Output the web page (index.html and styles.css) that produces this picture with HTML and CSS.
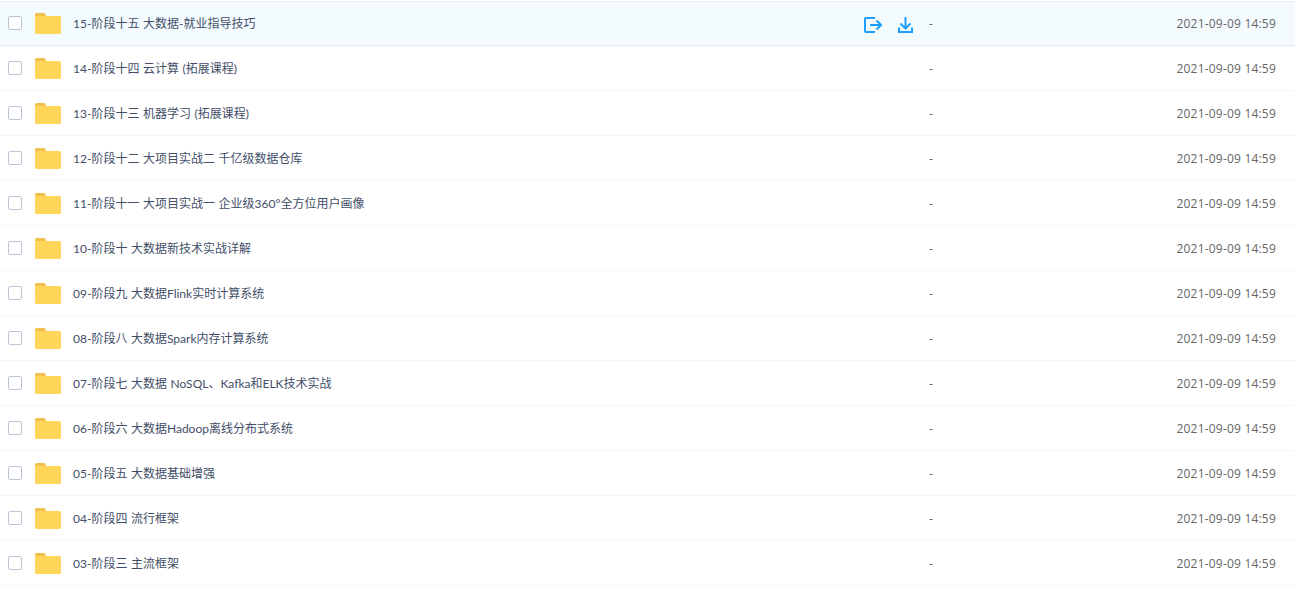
FILE: index.html
```html
<!DOCTYPE html>
<html lang="zh-CN">
<head>
<meta charset="utf-8">
<title>文件列表</title>
<link rel="stylesheet" href="styles.css">
</head>
<body>
<ul class="list">
<li class="row active"><span class="check"></span><svg class="folder" viewBox="0 0 26 21"><path class="tab" d="M0 1.500a1.500 1.500 0 0 1 1.500-1.500h7.500a1.500 1.500 0 0 1 1.500 1.500l1.500 2.500h-12z"/><rect class="body" y="3" width="26" height="18" rx="1.500"/></svg><span class="name">15-阶段十五 大数据-就业指导技巧</span><span class="actions"><svg class="act share" viewBox="0 0 18 16"><path d="M11 1H2a1 1 0 0 0-1 1v12a1 1 0 0 0 1 1h9M6 8h10.500M12.500 3.500L17 8l-4.500 4.500"/></svg><svg class="act download" viewBox="0 0 15 16"><path d="M7.500 0v11.500M2.500 6.500l5 5 5-5M1 10.500V15h13v-4.500"/></svg></span><span class="size">-</span><span class="date">2021-09-09 14:59</span></li>
<li class="row"><span class="check"></span><svg class="folder" viewBox="0 0 26 21"><path class="tab" d="M0 1.500a1.500 1.500 0 0 1 1.500-1.500h7.500a1.500 1.500 0 0 1 1.500 1.500l1.500 2.500h-12z"/><rect class="body" y="3" width="26" height="18" rx="1.500"/></svg><span class="name">14-阶段十四 云计算 (拓展课程)</span><span class="size">-</span><span class="date">2021-09-09 14:59</span></li>
<li class="row"><span class="check"></span><svg class="folder" viewBox="0 0 26 21"><path class="tab" d="M0 1.500a1.500 1.500 0 0 1 1.500-1.500h7.500a1.500 1.500 0 0 1 1.500 1.500l1.500 2.500h-12z"/><rect class="body" y="3" width="26" height="18" rx="1.500"/></svg><span class="name">13-阶段十三 机器学习 (拓展课程)</span><span class="size">-</span><span class="date">2021-09-09 14:59</span></li>
<li class="row"><span class="check"></span><svg class="folder" viewBox="0 0 26 21"><path class="tab" d="M0 1.500a1.500 1.500 0 0 1 1.500-1.500h7.500a1.500 1.500 0 0 1 1.500 1.500l1.500 2.500h-12z"/><rect class="body" y="3" width="26" height="18" rx="1.500"/></svg><span class="name">12-阶段十二 大项目实战二 千亿级数据仓库</span><span class="size">-</span><span class="date">2021-09-09 14:59</span></li>
<li class="row"><span class="check"></span><svg class="folder" viewBox="0 0 26 21"><path class="tab" d="M0 1.500a1.500 1.500 0 0 1 1.500-1.500h7.500a1.500 1.500 0 0 1 1.500 1.500l1.500 2.500h-12z"/><rect class="body" y="3" width="26" height="18" rx="1.500"/></svg><span class="name">11-阶段十一 大项目实战一 企业级360°全方位用户画像</span><span class="size">-</span><span class="date">2021-09-09 14:59</span></li>
<li class="row"><span class="check"></span><svg class="folder" viewBox="0 0 26 21"><path class="tab" d="M0 1.500a1.500 1.500 0 0 1 1.500-1.500h7.500a1.500 1.500 0 0 1 1.500 1.500l1.500 2.500h-12z"/><rect class="body" y="3" width="26" height="18" rx="1.500"/></svg><span class="name">10-阶段十 大数据新技术实战详解</span><span class="size">-</span><span class="date">2021-09-09 14:59</span></li>
<li class="row"><span class="check"></span><svg class="folder" viewBox="0 0 26 21"><path class="tab" d="M0 1.500a1.500 1.500 0 0 1 1.500-1.500h7.500a1.500 1.500 0 0 1 1.500 1.500l1.500 2.500h-12z"/><rect class="body" y="3" width="26" height="18" rx="1.500"/></svg><span class="name">09-阶段九 大数据Flink实时计算系统</span><span class="size">-</span><span class="date">2021-09-09 14:59</span></li>
<li class="row"><span class="check"></span><svg class="folder" viewBox="0 0 26 21"><path class="tab" d="M0 1.500a1.500 1.500 0 0 1 1.500-1.500h7.500a1.500 1.500 0 0 1 1.500 1.500l1.500 2.500h-12z"/><rect class="body" y="3" width="26" height="18" rx="1.500"/></svg><span class="name">08-阶段八 大数据Spark内存计算系统</span><span class="size">-</span><span class="date">2021-09-09 14:59</span></li>
<li class="row"><span class="check"></span><svg class="folder" viewBox="0 0 26 21"><path class="tab" d="M0 1.500a1.500 1.500 0 0 1 1.500-1.500h7.500a1.500 1.500 0 0 1 1.500 1.500l1.500 2.500h-12z"/><rect class="body" y="3" width="26" height="18" rx="1.500"/></svg><span class="name">07-阶段七 大数据 NoSQL、Kafka和ELK技术实战</span><span class="size">-</span><span class="date">2021-09-09 14:59</span></li>
<li class="row"><span class="check"></span><svg class="folder" viewBox="0 0 26 21"><path class="tab" d="M0 1.500a1.500 1.500 0 0 1 1.500-1.500h7.500a1.500 1.500 0 0 1 1.500 1.500l1.500 2.500h-12z"/><rect class="body" y="3" width="26" height="18" rx="1.500"/></svg><span class="name">06-阶段六 大数据Hadoop离线分布式系统</span><span class="size">-</span><span class="date">2021-09-09 14:59</span></li>
<li class="row"><span class="check"></span><svg class="folder" viewBox="0 0 26 21"><path class="tab" d="M0 1.500a1.500 1.500 0 0 1 1.500-1.500h7.500a1.500 1.500 0 0 1 1.500 1.500l1.500 2.500h-12z"/><rect class="body" y="3" width="26" height="18" rx="1.500"/></svg><span class="name">05-阶段五 大数据基础增强</span><span class="size">-</span><span class="date">2021-09-09 14:59</span></li>
<li class="row"><span class="check"></span><svg class="folder" viewBox="0 0 26 21"><path class="tab" d="M0 1.500a1.500 1.500 0 0 1 1.500-1.500h7.500a1.500 1.500 0 0 1 1.500 1.500l1.500 2.500h-12z"/><rect class="body" y="3" width="26" height="18" rx="1.500"/></svg><span class="name">04-阶段四 流行框架</span><span class="size">-</span><span class="date">2021-09-09 14:59</span></li>
<li class="row"><span class="check"></span><svg class="folder" viewBox="0 0 26 21"><path class="tab" d="M0 1.500a1.500 1.500 0 0 1 1.500-1.500h7.500a1.500 1.500 0 0 1 1.500 1.500l1.500 2.500h-12z"/><rect class="body" y="3" width="26" height="18" rx="1.500"/></svg><span class="name">03-阶段三 主流框架</span><span class="size">-</span><span class="date">2021-09-09 14:59</span></li>
</ul>
</body>
</html>
```
FILE: styles.css
```css
html, body {
  margin: 0;
  padding: 0;
  background: #fff;
  height: 591px;
  overflow: hidden;
}
body {
  padding-top: 1px;
  font-family: "Open Sans", "Noto Sans CJK SC", sans-serif;
  font-size: 12px;
  color: #424e67;
}
.list {
  list-style: none;
  margin: 0;
  padding: 0;
  border-top: 1px solid #e9f1fb;
}
.row {
  display: flex;
  align-items: center;
  height: 44px;
  border-bottom: 1px solid #f4f5fb;
}
.active {
  height: 43px;
  background: #f4fbff;
  border-bottom-color: #dcecfa;
}
.check {
  flex: none;
  box-sizing: border-box;
  width: 14px;
  height: 14px;
  margin-left: 8px;
  margin-right: 13px;
  background: #fff;
  border: 1px solid #bcc5d3;
  border-radius: 2px;
}
.active .check {
  margin-bottom: 1px;
}
.folder {
  flex: none;
  width: 26px;
  height: 21px;
  margin-top: 1px;
  margin-right: 12px;
}
.active .folder {
  margin-top: 0;
}
.tab { fill: #f1bf4c; }
.body { fill: #ffd659; }
.name {
  flex: 1;
  min-width: 0;
  margin-top: 2px;
  font-family: "Lato", "Noto Sans CJK SC", sans-serif;
  white-space: pre;
  word-spacing: 0.5px;
  line-height: 16px;
}
.active .name {
  margin-top: 0;
}
.actions {
  display: flex;
  align-items: center;
  gap: 16px;
  margin-top: 3px;
  margin-right: 16px;
}
.act {
  height: 16px;
  fill: none;
  stroke: #1e9fff;
  stroke-width: 2;
}
.share { width: 18px; }
.download { width: 15px; }
.size {
  flex: none;
  width: 247px;
  color: #666;
}
.date {
  flex: none;
  width: 100px;
  margin-right: 19px;
  text-align: right;
  white-space: nowrap;
  letter-spacing: 0.2px;
  color: #666;
}
```
